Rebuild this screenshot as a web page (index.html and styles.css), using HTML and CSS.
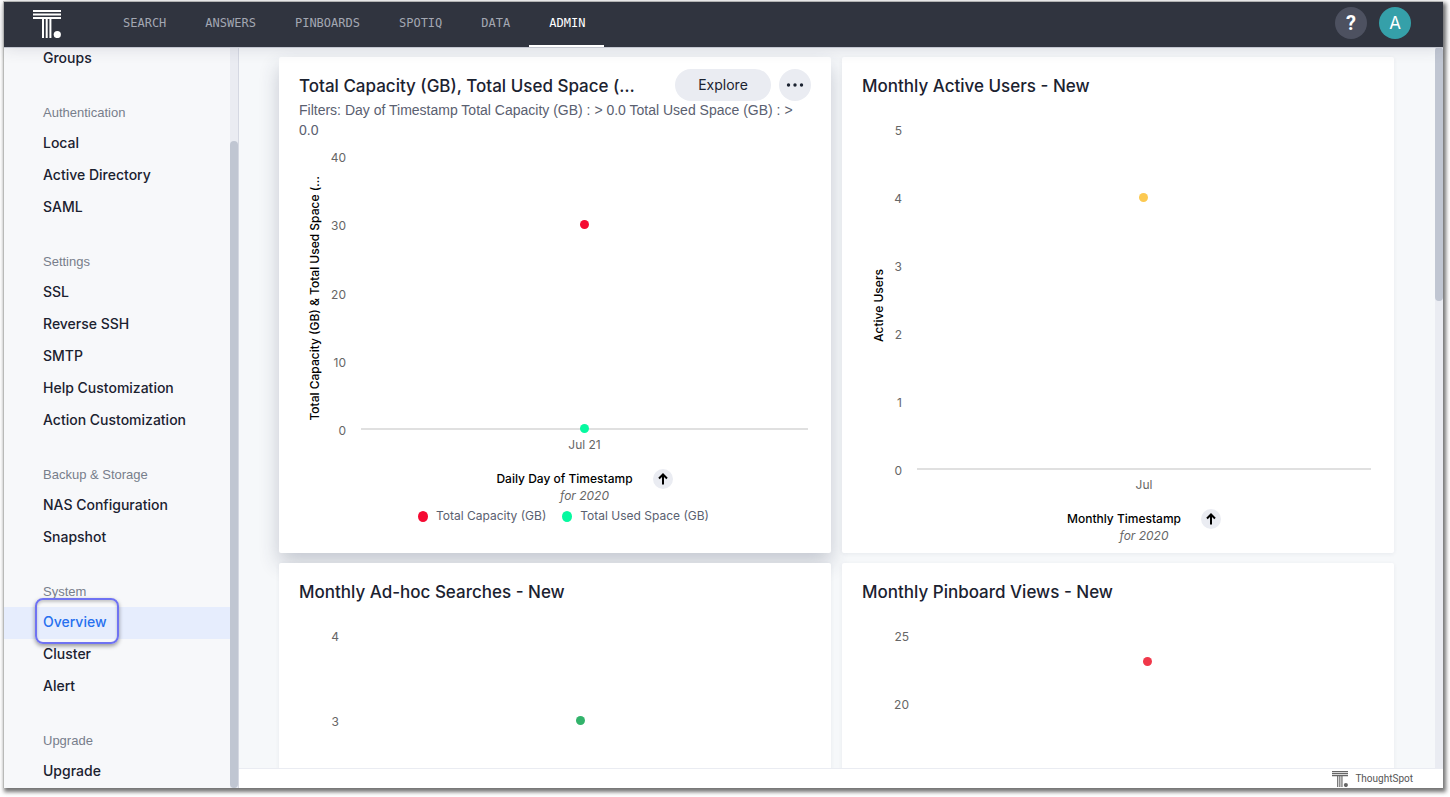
FILE: index.html
```html
<!DOCTYPE html>
<html lang="en">
<head>
<meta charset="utf-8">
<title>ThoughtSpot Admin</title>
<link rel="stylesheet" href="styles.css">
</head>
<body>
<div class="window">
  <header class="topbar">
    <a class="logo" href="#" aria-label="ThoughtSpot home">
      <svg width="28" height="28" viewBox="0 0 28 28" fill="#fff"><path d="M0 0h28v2H0zM0 3.500h28v2H0zM0 7h28v2H0zM9 9h2v19H9zM12.700 9h2v19h-2zM16.400 9h2v19h-2z"/><circle cx="24.300" cy="24.500" r="3.600"/></svg>
    </a>
    <nav class="nav">
      <a href="#">SEARCH</a>
      <a href="#">ANSWERS</a>
      <a href="#">PINBOARDS</a>
      <a href="#">SPOTIQ</a>
      <a href="#">DATA</a>
      <a href="#" class="nav-active">ADMIN</a>
    </nav>
    <div class="account">
      <button class="round help" aria-label="Help">?</button>
      <button class="round avatar" aria-label="Account">A</button>
    </div>
  </header>
  <div class="body">
    <aside class="sidebar">
      <div class="menu">
        <a href="#">Groups</a>
        <h2>Authentication</h2>
        <a href="#">Local</a>
        <a href="#">Active Directory</a>
        <a href="#">SAML</a>
        <h2>Settings</h2>
        <a href="#">SSL</a>
        <a href="#">Reverse SSH</a>
        <a href="#">SMTP</a>
        <a href="#">Help Customization</a>
        <a href="#">Action Customization</a>
        <h2>Backup &amp; Storage</h2>
        <a href="#">NAS Configuration</a>
        <a href="#">Snapshot</a>
        <h2>System</h2>
        <a href="#" class="menu-active"><span class="callout">Overview</span></a>
        <a href="#">Cluster</a>
        <a href="#">Alert</a>
        <h2>Upgrade</h2>
        <a href="#">Upgrade</a>
      </div>
      <div class="track"><div class="thumb thumb-menu"></div></div>
    </aside>
    <div class="content">
      <main class="scroller">
        <div class="board">
          <section class="card card-raised">
            <div class="card-head">
              <h3>Total Capacity (GB), Total Used Space (…</h3>
              <div class="actions">
                <button class="explore">Explore</button>
                <button class="round more" aria-label="More"><svg width="18" height="4" viewBox="0 0 18 4" fill="#1b2230"><circle cx="2.500" cy="2" r="1.700"/><circle cx="9" cy="2" r="1.700"/><circle cx="15.500" cy="2" r="1.700"/></svg></button>
              </div>
            </div>
            <p class="filters">Filters: Day of Timestamp Total Capacity (GB) : &gt; 0.0 Total Used Space (GB) : &gt; 0.0</p>
            <div class="chart chart-short chart-wide">
              <div class="y-title"><span>Total Capacity (GB) &amp; Total Used Space (…</span></div>
              <ol class="ticks"><li>40</li><li>30</li><li>20</li><li>10</li><li>0</li></ol>
              <div class="plot"><i class="dot red" style="top:25%"></i><i class="dot mint" style="top:100.5%"></i></div>
              <div class="x-axis">
                <div>Jul 21</div>
                <div class="x-title"><b>Daily Day of Timestamp</b><button class="round sort" aria-label="Sort"><svg width="10" height="12" viewBox="0 0 10 12" fill="none" stroke="#000" stroke-width="2"><path d="M5 11.500V2M1 5.500L5 1.500L9 5.500"/></svg></button></div>
                <em>for 2020</em>
              </div>
            </div>
            <ul class="legend">
              <li><i class="key red"></i>Total Capacity (GB)</li>
              <li><i class="key mint"></i>Total Used Space (GB)</li>
            </ul>
          </section>
          <section class="card">
            <div class="card-head"><h3>Monthly Active Users - New</h3></div>
            <div class="chart">
              <div class="y-title"><span>Active Users</span></div>
              <ol class="ticks"><li>5</li><li>4</li><li>3</li><li>2</li><li>1</li><li>0</li></ol>
              <div class="plot"><i class="dot yellow" style="top:20%"></i></div>
              <div class="x-axis">
                <div>Jul</div>
                <div class="x-title"><b>Monthly Timestamp</b><button class="round sort" aria-label="Sort"><svg width="10" height="12" viewBox="0 0 10 12" fill="none" stroke="#000" stroke-width="2"><path d="M5 11.500V2M1 5.500L5 1.500L9 5.500"/></svg></button></div>
                <em>for 2020</em>
              </div>
            </div>
          </section>
          <section class="card">
            <div class="card-head"><h3>Monthly Ad-hoc Searches - New</h3></div>
            <div class="chart chart-quarter">
              <div class="y-title"></div>
              <ol class="ticks"><li>4</li><li>3</li></ol>
              <div class="plot"><i class="dot green" style="top:100%"></i></div>
            </div>
          </section>
          <section class="card">
            <div class="card-head"><h3>Monthly Pinboard Views - New</h3></div>
            <div class="chart chart-wide chart-fifth">
              <div class="y-title"></div>
              <ol class="ticks"><li>25</li><li>20</li></ol>
              <div class="plot"><i class="dot coral" style="top:38%"></i></div>
            </div>
          </section>
        </div>
        <div class="track"><div class="thumb thumb-page"></div></div>
      </main>
      <footer class="footer">
        <svg width="16" height="16" viewBox="0 0 28 28" fill="#666"><path d="M0 0h28v2H0zM0 3.500h28v2H0zM0 7h28v2H0zM9 9h2v19H9zM12.700 9h2v19h-2zM16.400 9h2v19h-2z"/><circle cx="24.300" cy="24.500" r="3.600"/></svg>
        <span>ThoughtSpot</span>
      </footer>
    </div>
  </div>
</div>
</body>
</html>
```
FILE: styles.css
```css
* { box-sizing: border-box; }
body {
  margin: 0;
  height: 100vh;
  padding: 1px 7px 9px 3px;
  overflow: hidden;
  background: #fff;
  font-family: Inter, "Liberation Sans", sans-serif;
  color: #1b2230;
}
a { color: inherit; text-decoration: none; }
h2, h3, p, ol, ul { margin: 0; padding: 0; list-style: none; }
button { border: 0; padding: 0; font: inherit; color: inherit; cursor: pointer; }

.window {
  display: flex;
  flex-direction: column;
  height: 100%;
  border: solid #b9bab8;
  border-width: 1px 0 0 1px;
  box-shadow: 2px 3px 4px 1px rgba(0, 0, 0, 0.55);
}
.topbar {
  position: relative;
  z-index: 2;
  display: flex;
  flex: none;
  align-items: center;
  height: 45px;
  padding: 0 32px 0 29px;
  background: #30343f;
  box-shadow: 0 1px 0 #c3c6d0, 0 2px 16px rgba(48, 52, 80, 0.14);
}
.logo { display: flex; margin-right: 42px; padding-bottom: 2px; }
.nav {
  display: flex;
  flex: 1;
  align-self: stretch;
  font: 12px/43px "DejaVu Sans Mono", monospace;
  color: #a3a7b2;
}
.nav a { padding: 0 19px 0 20px; border-bottom: 2px solid transparent; }
.nav .nav-active { color: #fff; border-color: #fff; }
.account { display: flex; gap: 12px; padding-bottom: 3px; }
.round {
  display: flex;
  align-items: center;
  justify-content: center;
  width: 32px;
  height: 32px;
  border-radius: 50%;
  background: #eaecf2;
}
.account .round { color: #fff; font-size: 17px; }
.account .help { background: #4d5160; font: bold 20px "Roboto", sans-serif; }
.account .avatar { background: #35a0a9; }

.body { display: flex; flex: 1; min-height: 0; }
.sidebar {
  display: flex;
  width: 235px;
  flex: none;
  border-right: 1px solid #d5d8e2;
  background: #f7f8fa;
}
.menu {
  display: flex;
  flex: 1;
  flex-direction: column;
  justify-content: flex-end;
  min-height: 0;
}
.menu a {
  flex: none;
  padding: 0 0 2px 39px;
  font-size: 14px;
  font-weight: 500;
  line-height: 30px;
}
.menu h2 {
  flex: none;
  padding: 29px 0 6px 39px;
  font: 13px/18px "Liberation Sans", sans-serif;
  color: #777e8b;
}
.menu .menu-active { background: #e6edfd; color: #2770ef; }
.callout { position: relative; }
.callout::after {
  content: "";
  position: absolute;
  inset: -15px -12px -14px -8px;
  border: 2px solid #6f72f2;
  border-radius: 8px;
  box-shadow: 0 2px 4px rgba(0, 0, 0, 0.4), inset 0 2px 3px rgba(0, 0, 0, 0.2);
}
.track { display: flex; flex: none; flex-direction: column; width: 8px; background: #eaecf2; }
.thumb { border-radius: 4px; background: #c0c6d2; }
.thumb-menu { flex: 1; margin-top: 94px; }
.thumb-page { height: 254px; }

.content { display: flex; flex: 1; flex-direction: column; min-width: 0; }
.scroller { display: flex; flex: 1; min-height: 0; overflow: hidden; background: #f6f8fa; }
.board {
  display: grid;
  flex: 1;
  grid-template-columns: 1fr 1fr;
  grid-auto-rows: 496px;
  gap: 10px 11px;
  padding: 10px 41px 0 40px;
}
.card {
  min-width: 0;
  padding: 15px 23px 0 20px;
  border-radius: 2px;
  background: #fff;
  box-shadow: 0 1px 4px rgba(40, 50, 80, 0.07);
}
.card-raised { box-shadow: 0 10px 20px rgba(40, 50, 80, 0.24); }
.card-head {
  display: flex;
  align-items: center;
  justify-content: space-between;
  height: 28px;
  margin-right: -3px;
}
h3 { font-size: 17px; font-weight: 500; line-height: 28px; white-space: nowrap; }
.actions { display: flex; gap: 8px; padding-bottom: 2px; }
.explore {
  width: 96px;
  height: 32px;
  padding-bottom: 2px;
  border-radius: 16px;
  background: #eaecf2;
  font-size: 14px;
}
.filters { font: 14px/20px "Liberation Sans", sans-serif; color: #5a6070; }

.chart {
  display: grid;
  grid-template-columns: 34px 6px 15px 1fr;
  grid-template-rows: 340px auto;
  margin-top: 30px;
  font-size: 12px;
  line-height: 16px;
  color: #666;
}
.chart-wide { grid-template-columns: 32px 15px 15px 1fr; }
.chart-short { grid-template-rows: 273px auto; margin-top: 17px; }
.chart-quarter { grid-template-rows: 85px; }
.chart-fifth { grid-template-rows: 68px; }
.y-title {
  display: flex;
  align-items: center;
  justify-content: center;
  padding-top: 10px;
  color: #000;
  font-weight: 500;
}
.y-title span { writing-mode: vertical-rl; transform: rotate(180deg); white-space: nowrap; }
.ticks {
  display: flex;
  flex-direction: column;
  justify-content: space-between;
  align-items: flex-end;
  margin: -7px 0 -9px;
}
.plot { position: relative; grid-column: 4; border-bottom: 2px solid #e0e0e0; }
.chart-quarter .plot, .chart-fifth .plot { border-bottom: 0; }
.dot {
  position: absolute;
  left: 50%;
  width: 9px;
  height: 9px;
  margin: -5px 0 0 -5px;
  border-radius: 50%;
}
.red { background: #f50a32; }
.mint { background: #06f9a0; }
.yellow { background: #fcc951; }
.green { background: #32b36b; }
.coral { background: #f0384a; }
.x-axis { grid-column: 4; display: flex; flex-direction: column; align-items: center; padding-top: 7px; }
.x-title { display: flex; align-items: center; gap: 20px; height: 18px; margin-top: 17px; }
.x-title b { color: #000; font-weight: 500; }
.sort { width: 20px; height: 20px; }
.legend {
  display: flex;
  justify-content: center;
  gap: 16px;
  margin-top: 4px;
  padding-left: 20px;
  font-size: 12px;
  line-height: 16px;
  color: #5a6070;
}
.legend li { display: flex; align-items: center; gap: 8px; }
.key { width: 10px; height: 11px; border-radius: 50%; }

.footer {
  display: flex;
  flex: none;
  align-items: center;
  justify-content: flex-end;
  gap: 7px;
  height: 20px;
  padding: 0 30px 0 0;
  border-top: 1px solid #eaecf2;
  background: #fff;
  font: 10px/16px Roboto, sans-serif;
  color: #555;
}
```
